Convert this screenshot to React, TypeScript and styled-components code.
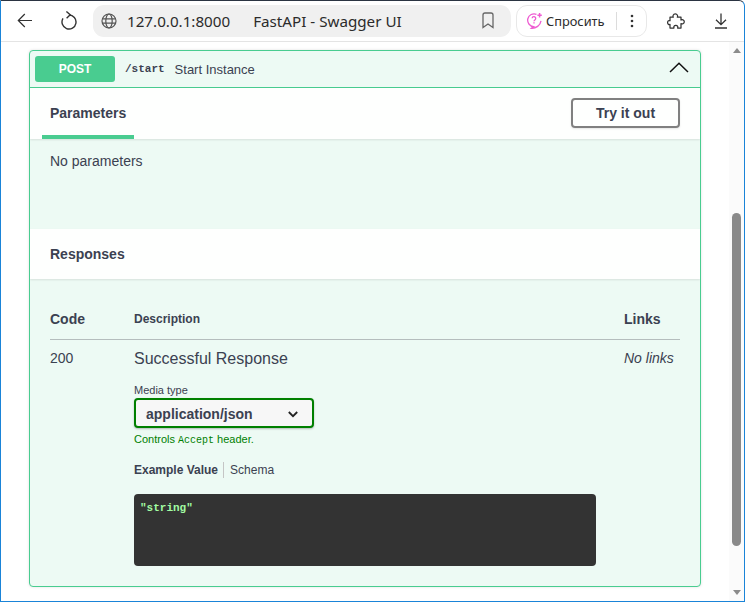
import React from "react";
import styled, { createGlobalStyle } from "styled-components";

const Global = createGlobalStyle`
  html, body { margin: 0; padding: 0; background: #fff; }
  * { box-sizing: border-box; }
  #root { width: 745px; height: 602px; overflow: hidden; }
`;

const Sans = `"Liberation Sans", Arial, sans-serif`;
const Mono = `"Liberation Mono", "DejaVu Sans Mono", monospace`;
const Chrome = `"Noto Sans", "Open Sans", sans-serif`;

const Frame = styled.div`
  width: 745px; height: 602px; display: flex; flex-direction: column;
  background: #fff; overflow: hidden;
  border-left: 1px solid #1a84d8; border-right: 1px solid #1a84d8;
  border-bottom: 1px solid #1a84d8; border-top: 1px solid #2b3442;
  border-top-right-radius: 6px;
`;
const Toolbar = styled.header`
  height: 41px; flex: none; display: flex; align-items: center;
  border-bottom: 1px solid #e4e4e4; padding: 0 0 1px 0; font-family: ${Chrome}; color: #2b2b2b;
`;
const NavBtn = styled.div<{ $w: number }>`
  width: ${(p) => p.$w}px; height: 30px; flex: none; display: flex; align-items: center; justify-content: center;
  svg { display: block; }
`;
const Address = styled.div`
  width: 418px; height: 32px; margin-left: 4px; background: #f0f0f0; border-radius: 11px;
  display: flex; align-items: center; padding: 0 16px 0 8px; font-size: 15.2px; flex: none;
`;
const Host = styled.span` margin-left: 10px; `;
const Title = styled.span` margin-left: 23px; flex: 1; `;
const Ask = styled.div`
  width: 131px; height: 32px; margin-left: 5px; border: 1px solid #e8e8e8; border-radius: 11px; flex: none;
  display: flex; align-items: center; padding-left: 9px; font-size: 12.8px;
`;
const AskText = styled.span` margin-left: 3px; width: 70px; `;
const Sep = styled.span` width: 1px; height: 18px; background: #dcdcdc; margin-right: 13px; `;
const Page = styled.div` flex: 1; min-height: 0; display: flex; `;
const Content = styled.main` flex: 1; padding: 8px 28px 0 28px; min-width: 0; `;
const Scrollbar = styled.aside`
  width: 15px; flex: none; background: #fbfbfb; display: flex; flex-direction: column; align-items: center; padding: 6px 0 6px;
`;
const ArrowUp = styled.div` width: 0; height: 0; border-left: 4.5px solid transparent; border-right: 4.5px solid transparent; border-bottom: 5px solid #8b8b8b; flex: none; `;
const ArrowDown = styled.div` width: 0; height: 0; border-left: 4.5px solid transparent; border-right: 4.5px solid transparent; border-top: 5px solid #8b8b8b; flex: none; margin-top: auto; `;
const Thumb = styled.div` width: 9px; height: 333px; margin-top: 160px; background: #8a8a8a; border-radius: 5px; flex: none; `;

const Block = styled.section`
  height: 537px; border: 1px solid #49cc90; border-radius: 4px; background: #edfaf4; overflow: hidden;
  font-family: ${Sans}; color: #3b4151; box-shadow: 0 0 3px rgba(0,0,0,.12);
`;
const Summary = styled.div`
  height: 37px; border-bottom: 1px solid #49cc90; display: flex; align-items: center; padding: 0 11px 0 5px;
`;
const Method = styled.div`
  width: 80px; height: 26px; background: #49cc90; border-radius: 3px; color: #fff; font-weight: 700; font-size: 12px;
  display: flex; align-items: center; justify-content: center;
`;
const Path = styled.span` font-family: ${Mono}; font-weight: 700; font-size: 11px; margin-left: 10px; `;
const Desc = styled.span` font-size: 13px; margin-left: 10px; flex: 1; `;
const Chevron = styled.svg` margin-top: -3px; display: block; `;
const SectionHead = styled.div<{ $h: number }>`
  height: ${(p) => p.$h}px; background: rgba(255,255,255,.9); display: flex; align-items: center; justify-content: space-between;
  box-shadow: 0 1px 2px rgba(0,0,0,.1); position: relative; padding: 0 20px;
`;
const Tab = styled.div`
  height: 100%; width: 92px; margin-left: -8px; padding-left: 8px; border-bottom: 4px solid #49cc90;
  display: flex; align-items: center; font-size: 14px; font-weight: 700; padding-top: 3px;
`;
const TryBtn = styled.button`
  width: 109px; height: 30px; background: transparent; border: 2px solid #808080; border-radius: 4px;
  font-family: ${Sans}; font-size: 14px; font-weight: 700; color: #3b4151; padding: 0; margin-top: -2px;
  box-shadow: 0 1px 2px rgba(0,0,0,.1);
`;
const ParamBody = styled.div` height: 90px; padding: 14px 20px; font-size: 14px; `;
const RespHead = styled.h4` margin: 0; font-size: 14px; font-weight: 700; `;
const Responses = styled.div` padding: 20px 20px 0; `;
const Row = styled.div<{ $head?: boolean }>`
  display: grid; grid-template-columns: 84px 490px 1fr;
  ${(p) => p.$head ? "height: 41px; align-items: center; border-bottom: 1px solid #b5bdbd;" : "padding-top: 10px;"}
`;
const HeadCell = styled.div<{ $small?: boolean }>`
  font-size: ${(p) => (p.$small ? 12 : 14)}px; font-weight: 700;
`;
const Code = styled.div` font-size: 14px; `;
const Links = styled.div` font-size: 14px; font-style: italic; `;
const RespDesc = styled.div` font-size: 16px; line-height: 18px; `;
const Label = styled.div` font-size: 11px; margin-top: 16px; line-height: 12px; `;
const Select = styled.div`
  width: 180px; height: 30px; margin-top: 2px; border: 2px solid #008000; border-radius: 4px; background: #f7f7f7;
  display: flex; align-items: center; justify-content: space-between; padding: 2px 14px 0 10px;
  font-size: 14px; font-weight: 700; box-shadow: 0 1px 2px rgba(0,0,0,.25);
`;
const Controls = styled.div` font-size: 11px; color: #008000; margin-top: 5px; line-height: 13px; `;
const Accept = styled.code` font-family: ${Mono}; font-size: 10px; `;
const Tabs = styled.div` display: flex; align-items: center; margin-top: 15px; font-size: 12px; height: 16px; `;
const TabStrong = styled.span` font-weight: 700; padding-right: 5px; border-right: 1px solid #c5c5c5; line-height: 16px; `;
const TabPlain = styled.span` padding-left: 6px; `;
const CodeBlock = styled.pre`
  width: 462px; height: 72px; margin: 16px 0 0; background: #333; border-radius: 4px; padding: 7px 6px;
  font-family: ${Mono}; font-weight: 700; font-size: 11px; line-height: 14px; color: #a2fca2;
`;

export default function App() {
  return (
    <>
      <Global />
      <Frame>
        <Toolbar>
          <NavBtn $w={48}>
            <svg width="16" height="15" viewBox="0 0 16 15" fill="none" stroke="#333" strokeWidth="1.2"><path d="M15 7.5H1.5M7.8 1 1.3 7.5 7.8 14" /></svg>
          </NavBtn>
          <NavBtn $w={40}>
            <svg width="16" height="20" viewBox="0 0 16 20" fill="none" stroke="#333" strokeWidth="1.4"><path d="M8 4a7 7 0 1 1-6 3.4" /><path d="M5.4 .5 9.2 3.8 5.6 7.2" /></svg>
          </NavBtn>
          <Address>
            <svg width="16" height="16" viewBox="0 0 16 16" fill="none" stroke="#555" strokeWidth="1.2"><circle cx="8" cy="8" r="7" /><ellipse cx="8" cy="8" rx="3.2" ry="7" /><path d="M1 5.8h14M1 10.2h14" /></svg>
            <Host>127.0.0.1:8000</Host>
            <Title>FastAPI - Swagger UI</Title>
            <svg width="14" height="17" viewBox="0 0 14 17" fill="none" stroke="#666" strokeWidth="1.3"><path d="M2 3a2 2 0 0 1 2-2h6a2 2 0 0 1 2 2v12.5L7 12l-5 3.5z" /></svg>
          </Address>
          <Ask>
            <svg width="17" height="17" viewBox="0 0 17 17" fill="none" stroke="#ee5cd2" strokeWidth="1.3"><path d="M10.5 2.3A6.4 6.4 0 1 0 7.6 14.6l-2.2 1.7c4.5.3 9-3 9.6-7.4" /><path d="M6.1 6.3c.2-2.3 3.8-2.1 3.6.2 0 1.4-1.7 1.4-1.7 2.8M8 10.2v1.3" /><path d="M13.6 1v4.4M11.4 3.2h4.4" strokeWidth="1.5" /></svg>
            <AskText>Спросить</AskText>
            <Sep />
            <svg width="4" height="14" viewBox="0 0 4 14" fill="#333"><circle cx="2" cy="2" r="1.3" /><circle cx="2" cy="7" r="1.3" /><circle cx="2" cy="12" r="1.3" /></svg>
          </Ask>
          <NavBtn $w={58}>
            <svg width="18" height="16" viewBox="0 0 18 16" fill="none" stroke="#333" strokeWidth="1.25" strokeLinejoin="round"><path d="M3 4.2H6.3c-.6-1-.3-3.4 2-3.4s2.6 2.4 2 3.4H14V7c1-.6 3.3-.3 3.3 1.8S15 11.2 14 10.6V15H10.6c.5-1 .1-2.6-1.8-2.6S6.6 14 7 15H3V11.4c-1 .6-2.4-.1-2.4-1.8S2 7.2 3 7.8z" /></svg>
          </NavBtn>
          <NavBtn $w={32}>
            <svg width="14" height="16" viewBox="0 0 14 16" fill="none" stroke="#333" strokeWidth="1.3"><path d="M7 0.5v11M2 6.8 7 11.6l5-4.8M1 15h12" /></svg>
          </NavBtn>
        </Toolbar>
        <Page>
          <Content>
            <Block>
              <Summary>
                <Method>POST</Method>
                <Path>/start</Path>
                <Desc>Start Instance</Desc>
                <Chevron width="20" height="11" viewBox="0 0 20 11" fill="none" stroke="#111" strokeWidth="1.5"><path d="M1 10 10 1.2 19 10" /></Chevron>
              </Summary>
              <SectionHead $h={51}>
                <Tab>Parameters</Tab>
                <TryBtn>Try it out</TryBtn>
              </SectionHead>
              <ParamBody>No parameters</ParamBody>
              <SectionHead $h={50}>
                <RespHead>Responses</RespHead>
              </SectionHead>
              <Responses>
                <Row $head>
                  <HeadCell>Code</HeadCell>
                  <HeadCell $small>Description</HeadCell>
                  <HeadCell>Links</HeadCell>
                </Row>
                <Row>
                  <Code>200</Code>
                  <div>
                    <RespDesc>Successful Response</RespDesc>
                    <Label>Media type</Label>
                    <Select>
                      application/json
                      <svg width="10" height="7" viewBox="0 0 10 7" fill="none" stroke="#222" strokeWidth="1.8"><path d="M.8 1 5 5.2 9.2 1" /></svg>
                    </Select>
                    <Controls>Controls <Accept>Accept</Accept> header.</Controls>
                    <Tabs>
                      <TabStrong>Example Value</TabStrong>
                      <TabPlain>Schema</TabPlain>
                    </Tabs>
                    <CodeBlock>"string"</CodeBlock>
                  </div>
                  <Links>No links</Links>
                </Row>
              </Responses>
            </Block>
          </Content>
          <Scrollbar>
            <ArrowUp />
            <Thumb />
            <ArrowDown />
          </Scrollbar>
        </Page>
      </Frame>
    </>
  );
}
